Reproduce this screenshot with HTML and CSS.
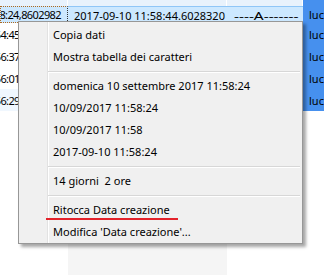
FILE: index.html
```html
<!DOCTYPE html>
<html lang="it">
<head>
  <meta charset="UTF-8">
  <title>Menu data creazione</title>
  <link rel="stylesheet" href="styles.css">
</head>
<body>

  <!-- File list -->
  <div class="list">
    <div class="row band">
      <div class="cell c1"></div>
      <div class="cell c2"></div>
      <div class="cell c3"></div>
      <div class="cell c4"></div>
    </div>
    <div class="row sel">
      <div class="cell c1 focus"><span>10/09/2017 11:58:24,8602982</span></div>
      <div class="cell c2"><span>2017-09-10 11:58:44.6028320</span></div>
      <div class="cell c3"><span>----A-------</span></div>
      <div class="cell c4"><span>luca</span></div>
    </div>
    <div class="row">
      <div class="cell c1"><span>10/09/2017 11:54:45,1048296</span></div>
      <div class="cell c2"><span>2017-09-10 11:54:45.1048296</span></div>
      <div class="cell c3"><span>----A-------</span></div>
      <div class="cell c4"><span>luca</span></div>
    </div>
    <div class="row">
      <div class="cell c1"><span>10/09/2017 11:56:37,5520417</span></div>
      <div class="cell c2"><span>2017-09-10 11:56:37.5520417</span></div>
      <div class="cell c3"><span>----A-------</span></div>
      <div class="cell c4"><span>luca</span></div>
    </div>
    <div class="row">
      <div class="cell c1"><span>10/09/2017 11:56:01,3390125</span></div>
      <div class="cell c2"><span>2017-09-10 11:56:01.3390125</span></div>
      <div class="cell c3"><span>----A-------</span></div>
      <div class="cell c4"><span>luca</span></div>
    </div>
    <div class="row hover">
      <div class="cell c1"><span>10/09/2017 11:56:29,7781240</span></div>
      <div class="cell c2"><span>2017-09-10 11:56:29.7781240</span></div>
      <div class="cell c3"><span>----A-------</span></div>
      <div class="cell c4"><span>luca</span></div>
    </div>
    <div class="row rest">
      <div class="cell c1"></div>
      <div class="cell c2"></div>
      <div class="cell c3"></div>
      <div class="cell c4"></div>
    </div>
  </div>

  <!-- Context menu -->
  <div class="menu">
    <div class="item">Copia dati</div>
    <div class="item">Mostra tabella dei caratteri</div>
    <div class="sep"></div>
    <div class="item">domenica 10 settembre 2017 11:58:24</div>
    <div class="item">10/09/2017 11:58:24</div>
    <div class="item">10/09/2017 11:58</div>
    <div class="item">2017-09-10 11:58:24</div>
    <div class="sep"></div>
    <div class="item">14 giorni&nbsp; 2 ore</div>
    <div class="sep"></div>
    <div class="item marked">Ritocca Data creazione<span class="mark"></span></div>
    <div class="item">Modifica 'Data creazione'...</div>
  </div>

</body>
</html>
```

FILE: styles.css
```css
* {
  box-sizing: border-box;
  margin: 0;
  padding: 0;
}

body, html {
  height: 100%;
  background: white;
  font-family: "Noto Sans", sans-serif;
  font-size: 11px;
  color: black;
  overflow: hidden;
}

.list {
  display: flex;
  flex-direction: column;
  height: 100%;
}

.row {
  display: grid;
  grid-template-columns: 68px 159px 76px 1fr;
  height: 22px;
}

.cell {
  display: flex;
  align-items: center;
  overflow: hidden;
  white-space: nowrap;
}

.cell span {
  flex-shrink: 0;
}

.c1 {
  justify-content: flex-end;
  padding-right: 6px;
  letter-spacing: -0.6px;
}

.c2 {
  padding-left: 6px;
}

.c3 {
  padding-left: 7px;
}

.c3 span {
  transform: scaleX(1.4);
  transform-origin: left center;
}

.c4 {
  padding-left: 6px;
  background: #4690ee;
}

.band {
  height: 6px;
}

.band .c1,
.band .c2,
.band .c3 {
  background: #e8f2fc;
  border-right: 1px solid white;
}

.sel {
  height: 17px;
}

.sel .c1,
.sel .c2,
.sel .c3 {
  background: #cce8ff;
  border-top: 1px solid #8fc6f7;
}

.sel .focus {
  border: 1px dotted #b06a1e;
  border-right-color: #333;
}

.hover .c1 {
  background: #f0f7fe;
}

.rest {
  flex: 1;
}

.rest .c2 {
  background: #f5f5f5;
}

.rest .c4 {
  background: white;
}

.menu {
  position: absolute;
  left: 18px;
  top: 21px;
  width: 285px;
  padding: 2px 2px 0 2px;
  border: 1px solid #979797;
  background: linear-gradient(to right, #f0f0f0 28px, #e2e2e2 28px, #e2e2e2 29px, #fff 29px, #fff 30px, #f0f0f0 30px);
  box-shadow: 3px 3px 3px rgba(0, 0, 0, 0.35);
}

.item {
  position: relative;
  height: 22px;
  line-height: 22px;
  padding-left: 32px;
  white-space: nowrap;
}

.sep {
  height: 7px;
  margin-left: 27px;
  border-top: 3px solid transparent;
  background: linear-gradient(#d7d7d7 0, #d7d7d7 1px, #fff 1px, #fff 2px, transparent 2px);
  background-clip: content-box;
}

.mark {
  position: absolute;
  left: 25px;
  bottom: 1px;
  width: 132px;
  height: 2px;
  background: #e3232b;
}
```
